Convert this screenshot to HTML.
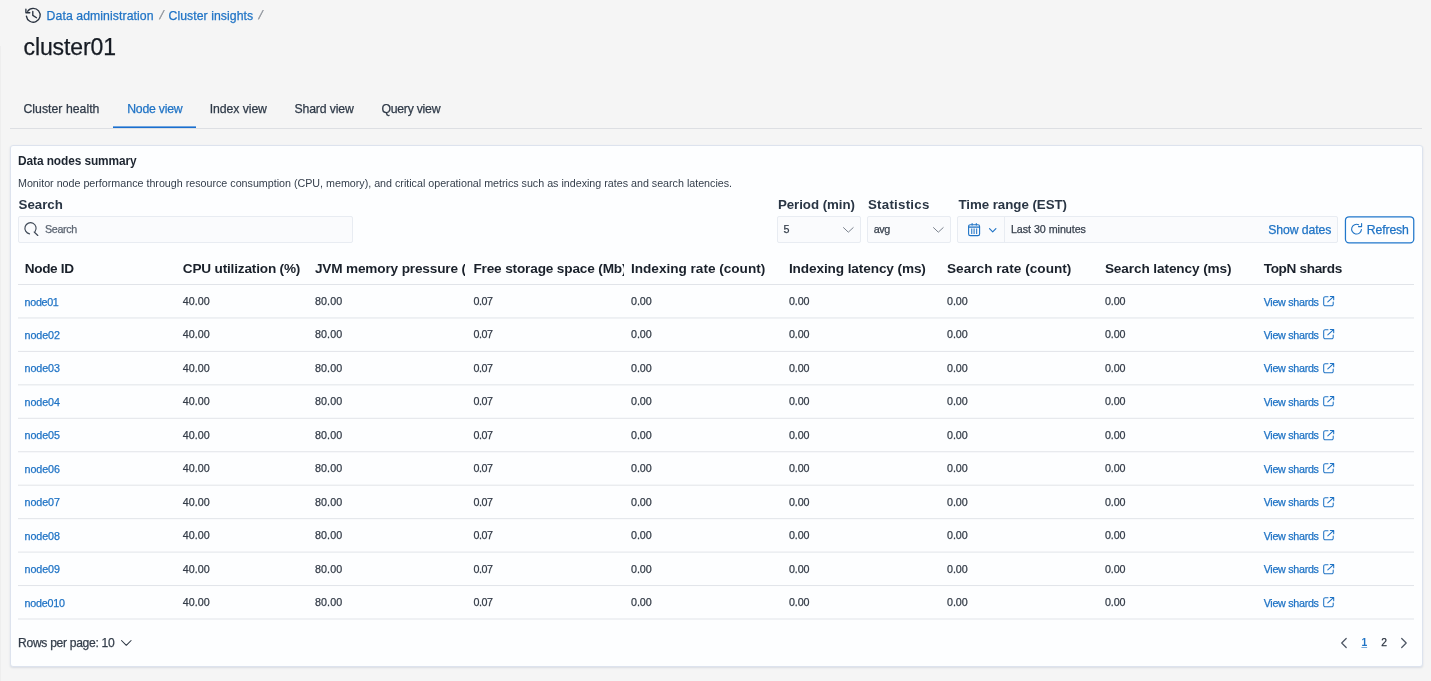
<!DOCTYPE html>
<html lang="en">
<head>
<meta charset="utf-8">
<title>cluster01 - Cluster insights</title>
<style>
*{box-sizing:border-box;margin:0;padding:0}
html,body{width:1431px;height:681px;overflow:hidden}
html{background:#f5f5f5}
body{font-family:"Liberation Sans",sans-serif;color:#2a3340;position:relative}
#page{position:absolute;left:0;top:0;width:1431px;height:681px;will-change:transform}
.t{position:absolute;white-space:nowrap;line-height:1;-webkit-text-stroke:0.25px}
.b{position:absolute}
svg{position:absolute;overflow:visible}
.field{position:absolute;top:216px;height:27px;background:#fafbfd;border:1px solid #e8ecf2;border-radius:2px}
</style>
</head>
<body>
<div id="page">
<!-- breadcrumb history icon -->
<svg style="left:20px;top:2px" width="30" height="26" viewBox="0 0 30 26" fill="none" stroke="#2a3340" stroke-width="1.35" stroke-linecap="round" stroke-linejoin="round"><path d="M7.6 9.3A6.9 6.9 0 1 1 6.4 14.1"/><path d="M5.9 7.2V10.7H9.8"/><path d="M12.8 9.4V13.4L16.5 15.7"/></svg>

<div class="b" style="left:0;top:46px;width:1px;height:635px;background:#eeeeee"></div>
<!-- tabs -->
<div class="b" style="left:10px;top:128px;width:1412px;height:1px;background:#dddfe3"></div>
<svg style="left:0;top:120px" width="300" height="10" viewBox="0 0 300 10"><rect x="113" y="6.4" width="83" height="1.6" fill="#1a6fcf"/></svg>

<!-- panel -->
<div class="b" style="left:10px;top:145px;width:1412.5px;height:522px;background:#fdfeff;border:1px solid #dde3ee;border-radius:3px;box-shadow:0 1px 2px rgba(70,90,130,.16)"></div>

<!-- fields -->
<div class="field" style="left:18px;width:334.5px"></div>
<svg style="left:20px;top:218px" width="22" height="22" viewBox="0 0 22 22" fill="none" stroke="#3f4957" stroke-width="1.15" stroke-linecap="round"><path d="M9.53 15.81A5.6 5.6 0 1 1 15.09 13.51"/><path d="M14.2 14l3.6 3.5"/></svg>

<div class="field" style="left:776.5px;width:84.5px"></div>
<svg style="left:842.5px;top:227px" width="11" height="6" viewBox="0 0 11 6" fill="none" stroke="#7a828e" stroke-width="1" stroke-linecap="round" stroke-linejoin="round"><path d="M.5.6l4.8 4.6L10.2.6"/></svg>
<div class="field" style="left:867px;width:84px"></div>
<svg style="left:932.8px;top:227px" width="11" height="6" viewBox="0 0 11 6" fill="none" stroke="#7a828e" stroke-width="1" stroke-linecap="round" stroke-linejoin="round"><path d="M.5.6l4.8 4.6L10.2.6"/></svg>

<div class="field" style="left:957px;width:381px"></div>
<div class="b" style="left:1004px;top:217px;width:1px;height:25px;background:#e8ecf2"></div>
<svg style="left:968.2px;top:223px" width="13" height="14" viewBox="0 0 13 14" fill="none" stroke="#1f73c5" stroke-width="1.1"><rect x=".6" y="1.7" width="11" height="10.9" rx="1.7"/><path d="M.6 4.1h11" stroke-width="1.3"/><path d="M4.1.5v1.6M8.3.5v1.6" stroke-linecap="round"/><path d="M3.7 5.6v5.3M6.1 5.6v5.3M8.6 5.6v5.3" stroke-linecap="butt" stroke-width="1.2" stroke-opacity=".85"/></svg>
<svg style="left:989px;top:227.6px" width="8" height="5" viewBox="0 0 8 5" fill="none" stroke="#1f73c5" stroke-width="1.15" stroke-linecap="round" stroke-linejoin="round"><path d="M.5.6l3.2 3.2L6.9.6"/></svg>

<!-- refresh button -->
<svg style="left:1344px;top:215px" width="72" height="30" viewBox="0 0 72 30"><rect x="1.45" y="1.75" width="68.3" height="26.1" rx="3.6" fill="#fdfeff" stroke="#2177cb" stroke-width="1.25"/></svg>
<svg style="left:1351px;top:223.4px" width="12" height="12" viewBox="0 0 12 12" fill="none" stroke="#1f73c5" stroke-width="1.1" stroke-linecap="round" stroke-linejoin="round"><path d="M10.4 6.6A4.9 4.9 0 1 1 7.6 1.7"/><path d="M10.6.5v3.1H7.5"/></svg>

<!-- table lines -->
<svg style="left:0;top:0" width="1431" height="681" viewBox="0 0 1431 681" fill="#e1e4e9"><rect x="18" y="284.00" width="1396" height="1"/><rect x="18" y="317.45" width="1396" height="1"/><rect x="18" y="350.90" width="1396" height="1"/><rect x="18" y="384.35" width="1396" height="1"/><rect x="18" y="417.80" width="1396" height="1"/><rect x="18" y="451.25" width="1396" height="1"/><rect x="18" y="484.70" width="1396" height="1"/><rect x="18" y="518.15" width="1396" height="1"/><rect x="18" y="551.60" width="1396" height="1"/><rect x="18" y="585.05" width="1396" height="1"/><rect x="18" y="618.50" width="1396" height="1"/></svg>
<svg style="left:1322.9px;top:296.00px" width="11" height="11" viewBox="0 0 11 11" fill="none" stroke="#1f73c5" stroke-width="1.05" stroke-linecap="round" stroke-linejoin="round"><path d="M5 .8H2.200a1.500 1.500 0 0 0-1.500 1.500V8.300a1.500 1.500 0 0 0 1.500 1.500H8.700a1.500 1.500 0 0 0 1.500-1.500V6.100"/><path d="M4.800 5.900L10.500.6M7.300.5H10.700V3.700"/></svg>
<svg style="left:1322.9px;top:329.45px" width="11" height="11" viewBox="0 0 11 11" fill="none" stroke="#1f73c5" stroke-width="1.05" stroke-linecap="round" stroke-linejoin="round"><path d="M5 .8H2.200a1.500 1.500 0 0 0-1.500 1.500V8.300a1.500 1.500 0 0 0 1.500 1.500H8.700a1.500 1.500 0 0 0 1.500-1.500V6.100"/><path d="M4.800 5.900L10.500.6M7.300.5H10.700V3.700"/></svg>
<svg style="left:1322.9px;top:362.90px" width="11" height="11" viewBox="0 0 11 11" fill="none" stroke="#1f73c5" stroke-width="1.05" stroke-linecap="round" stroke-linejoin="round"><path d="M5 .8H2.200a1.500 1.500 0 0 0-1.500 1.500V8.300a1.500 1.500 0 0 0 1.500 1.500H8.700a1.500 1.500 0 0 0 1.500-1.500V6.100"/><path d="M4.800 5.900L10.500.6M7.300.5H10.700V3.700"/></svg>
<svg style="left:1322.9px;top:396.35px" width="11" height="11" viewBox="0 0 11 11" fill="none" stroke="#1f73c5" stroke-width="1.05" stroke-linecap="round" stroke-linejoin="round"><path d="M5 .8H2.200a1.500 1.500 0 0 0-1.500 1.500V8.300a1.500 1.500 0 0 0 1.500 1.500H8.700a1.500 1.500 0 0 0 1.500-1.500V6.100"/><path d="M4.800 5.900L10.500.6M7.300.5H10.700V3.700"/></svg>
<svg style="left:1322.9px;top:429.80px" width="11" height="11" viewBox="0 0 11 11" fill="none" stroke="#1f73c5" stroke-width="1.05" stroke-linecap="round" stroke-linejoin="round"><path d="M5 .8H2.200a1.500 1.500 0 0 0-1.500 1.500V8.300a1.500 1.500 0 0 0 1.500 1.500H8.700a1.500 1.500 0 0 0 1.500-1.500V6.100"/><path d="M4.800 5.900L10.500.6M7.300.5H10.700V3.700"/></svg>
<svg style="left:1322.9px;top:463.25px" width="11" height="11" viewBox="0 0 11 11" fill="none" stroke="#1f73c5" stroke-width="1.05" stroke-linecap="round" stroke-linejoin="round"><path d="M5 .8H2.200a1.500 1.500 0 0 0-1.500 1.500V8.300a1.500 1.500 0 0 0 1.500 1.500H8.700a1.500 1.500 0 0 0 1.500-1.500V6.100"/><path d="M4.800 5.900L10.500.6M7.300.5H10.700V3.700"/></svg>
<svg style="left:1322.9px;top:496.70px" width="11" height="11" viewBox="0 0 11 11" fill="none" stroke="#1f73c5" stroke-width="1.05" stroke-linecap="round" stroke-linejoin="round"><path d="M5 .8H2.200a1.500 1.500 0 0 0-1.500 1.500V8.300a1.500 1.500 0 0 0 1.500 1.500H8.700a1.500 1.500 0 0 0 1.500-1.500V6.100"/><path d="M4.800 5.900L10.500.6M7.300.5H10.700V3.700"/></svg>
<svg style="left:1322.9px;top:530.15px" width="11" height="11" viewBox="0 0 11 11" fill="none" stroke="#1f73c5" stroke-width="1.05" stroke-linecap="round" stroke-linejoin="round"><path d="M5 .8H2.200a1.500 1.500 0 0 0-1.500 1.500V8.300a1.500 1.500 0 0 0 1.500 1.500H8.700a1.500 1.500 0 0 0 1.500-1.500V6.100"/><path d="M4.800 5.900L10.500.6M7.300.5H10.700V3.700"/></svg>
<svg style="left:1322.9px;top:563.60px" width="11" height="11" viewBox="0 0 11 11" fill="none" stroke="#1f73c5" stroke-width="1.05" stroke-linecap="round" stroke-linejoin="round"><path d="M5 .8H2.200a1.500 1.500 0 0 0-1.500 1.500V8.300a1.500 1.500 0 0 0 1.500 1.500H8.700a1.500 1.500 0 0 0 1.500-1.500V6.100"/><path d="M4.800 5.900L10.500.6M7.300.5H10.700V3.700"/></svg>
<svg style="left:1322.9px;top:597.05px" width="11" height="11" viewBox="0 0 11 11" fill="none" stroke="#1f73c5" stroke-width="1.05" stroke-linecap="round" stroke-linejoin="round"><path d="M5 .8H2.200a1.500 1.500 0 0 0-1.500 1.500V8.300a1.500 1.500 0 0 0 1.500 1.500H8.700a1.500 1.500 0 0 0 1.500-1.500V6.100"/><path d="M4.800 5.900L10.500.6M7.300.5H10.700V3.700"/></svg>

<!-- footer -->
<svg style="left:120.8px;top:640.2px" width="11" height="6" viewBox="0 0 11 6" fill="none" stroke="#2a3340" stroke-width="1.05" stroke-linecap="round" stroke-linejoin="round"><path d="M.5.5l4.8 4.8L10.1.5"/></svg>
<svg style="left:1341px;top:638px" width="6" height="10" viewBox="0 0 6 10" fill="none" stroke="#4d5664" stroke-width="1.25" stroke-linecap="round" stroke-linejoin="round"><path d="M5.2.5L.7 5l4.5 4.5"/></svg>
<svg style="left:1401.3px;top:638px" width="6" height="10" viewBox="0 0 6 10" fill="none" stroke="#4d5664" stroke-width="1.25" stroke-linecap="round" stroke-linejoin="round"><path d="M.7.5L5.2 5 .7 9.500"/></svg>

<div class="t" style="left:46.6px;top:10.22px;font-size:12.25px;color:#1f73c5;letter-spacing:0.076px;">Data administration</div>
<div class="t" style="left:159.5px;top:9.22px;font-size:12.25px;color:#8c9199;transform:skewX(-14deg);">/</div>
<div class="t" style="left:168.5px;top:10.22px;font-size:12.25px;color:#1f73c5;letter-spacing:0.059px;">Cluster insights</div>
<div class="t" style="left:258.5px;top:9.22px;font-size:12.25px;color:#8c9199;transform:skewX(-14deg);">/</div>
<div class="t" style="left:23.6px;top:36.22px;font-size:23px;color:#161b23;letter-spacing:-0.125px;">cluster01</div>
<div class="t" style="left:23.5px;top:103.22px;font-size:12.25px;color:#2f3a48;letter-spacing:0.022px;">Cluster health</div>
<div class="t" style="left:127.2px;top:103.22px;font-size:12.25px;color:#1f73c5;letter-spacing:-0.223px;">Node view</div>
<div class="t" style="left:209.8px;top:103.22px;font-size:12.25px;color:#2f3a48;letter-spacing:-0.079px;">Index view</div>
<div class="t" style="left:294.5px;top:103.22px;font-size:12.25px;color:#2f3a48;letter-spacing:-0.151px;">Shard view</div>
<div class="t" style="left:381.4px;top:103.22px;font-size:12.25px;color:#2f3a48;letter-spacing:-0.238px;">Query view</div>
<div class="t" style="left:18.1px;top:156.22px;font-size:11.9px;font-weight:bold;-webkit-text-stroke:0;color:#1d2530;letter-spacing:-0.099px;">Data nodes summary</div>
<div class="t" style="left:18.0px;top:178.22px;font-size:10.72px;color:#343e4b;letter-spacing:-0.010px;-webkit-text-stroke:0;">Monitor node performance through resource consumption (CPU, memory), and critical operational metrics such as indexing rates and search latencies.</div>
<div class="t" style="left:18.5px;top:198.22px;font-size:13.3px;font-weight:bold;-webkit-text-stroke:0;color:#2a3645;letter-spacing:0.007px;">Search</div>
<div class="t" style="left:777.9px;top:198.22px;font-size:13.3px;font-weight:bold;-webkit-text-stroke:0;color:#2a3645;letter-spacing:-0.048px;">Period (min)</div>
<div class="t" style="left:868.0px;top:198.22px;font-size:13.3px;font-weight:bold;-webkit-text-stroke:0;color:#2a3645;letter-spacing:0.248px;">Statistics</div>
<div class="t" style="left:958.4px;top:198.22px;font-size:13.3px;font-weight:bold;-webkit-text-stroke:0;color:#2a3645;letter-spacing:-0.032px;">Time range (EST)</div>
<div class="t" style="left:44.9px;top:224.22px;font-size:10.72px;color:#5d6673;letter-spacing:-0.311px;">Search</div>
<div class="t" style="left:783.4px;top:224.22px;font-size:10.72px;color:#39424f;">5</div>
<div class="t" style="left:873.7px;top:224.22px;font-size:10.72px;color:#39424f;letter-spacing:-0.332px;">avg</div>
<div class="t" style="left:1010.9px;top:224.22px;font-size:10.72px;color:#39424f;letter-spacing:-0.045px;">Last 30 minutes</div>
<div class="t" style="left:1268.2px;top:224.22px;font-size:12.25px;color:#1f73c5;letter-spacing:-0.102px;">Show dates</div>
<div class="t" style="left:1366.8px;top:224.22px;font-size:12.25px;color:#1f73c5;letter-spacing:-0.129px;">Refresh</div>
<div class="t" style="left:24.7px;top:262.22px;font-size:13.6px;font-weight:bold;-webkit-text-stroke:0;color:#1a212b;letter-spacing:-0.337px;">Node ID</div>
<div class="t" style="left:182.8px;top:262.22px;font-size:13.6px;font-weight:bold;-webkit-text-stroke:0;color:#1a212b;letter-spacing:-0.180px;">CPU utilization (%)</div>
<div class="t" style="left:314.9px;top:262.22px;font-size:13.6px;font-weight:bold;-webkit-text-stroke:0;color:#1a212b;letter-spacing:-0.149px;width:150px;overflow:hidden;">JVM memory pressure (%)</div>
<div class="t" style="left:473.4px;top:262.22px;font-size:13.6px;font-weight:bold;-webkit-text-stroke:0;color:#1a212b;letter-spacing:-0.149px;width:150.5px;overflow:hidden;">Free storage space (Mb)</div>
<div class="t" style="left:631.0px;top:262.22px;font-size:13.6px;font-weight:bold;-webkit-text-stroke:0;color:#1a212b;letter-spacing:-0.011px;">Indexing rate (count)</div>
<div class="t" style="left:788.9px;top:262.22px;font-size:13.6px;font-weight:bold;-webkit-text-stroke:0;color:#1a212b;letter-spacing:-0.100px;">Indexing latency (ms)</div>
<div class="t" style="left:947.0px;top:262.22px;font-size:13.6px;font-weight:bold;-webkit-text-stroke:0;color:#1a212b;letter-spacing:0.027px;">Search rate (count)</div>
<div class="t" style="left:1104.9px;top:262.22px;font-size:13.6px;font-weight:bold;-webkit-text-stroke:0;color:#1a212b;letter-spacing:-0.098px;">Search latency (ms)</div>
<div class="t" style="left:1263.7px;top:262.22px;font-size:13.6px;font-weight:bold;-webkit-text-stroke:0;color:#1a212b;letter-spacing:-0.343px;">TopN shards</div>
<div class="t" style="left:24.6px;top:297.22px;font-size:10.72px;color:#1f73c5;letter-spacing:-0.314px;">node01</div>
<div class="t" style="left:182.8px;top:296.22px;font-size:10.72px;color:#353d49;letter-spacing:0.054px;">40.00</div>
<div class="t" style="left:314.9px;top:296.22px;font-size:10.72px;color:#353d49;letter-spacing:0.154px;">80.00</div>
<div class="t" style="left:473.4px;top:296.22px;font-size:10.72px;color:#353d49;letter-spacing:-0.469px;">0.07</div>
<div class="t" style="left:631.0px;top:296.22px;font-size:10.72px;color:#353d49;letter-spacing:-0.069px;">0.00</div>
<div class="t" style="left:788.9px;top:296.22px;font-size:10.72px;color:#353d49;letter-spacing:-0.069px;">0.00</div>
<div class="t" style="left:947.0px;top:296.22px;font-size:10.72px;color:#353d49;letter-spacing:-0.069px;">0.00</div>
<div class="t" style="left:1104.9px;top:296.22px;font-size:10.72px;color:#353d49;letter-spacing:-0.069px;">0.00</div>
<div class="t" style="left:1263.7px;top:297.22px;font-size:10.72px;color:#1f73c5;letter-spacing:-0.291px;">View shards</div>
<div class="t" style="left:24.6px;top:330.22px;font-size:10.72px;color:#1f73c5;letter-spacing:-0.080px;">node02</div>
<div class="t" style="left:182.8px;top:329.22px;font-size:10.72px;color:#353d49;letter-spacing:0.054px;">40.00</div>
<div class="t" style="left:314.9px;top:329.22px;font-size:10.72px;color:#353d49;letter-spacing:0.154px;">80.00</div>
<div class="t" style="left:473.4px;top:329.22px;font-size:10.72px;color:#353d49;letter-spacing:-0.469px;">0.07</div>
<div class="t" style="left:631.0px;top:329.22px;font-size:10.72px;color:#353d49;letter-spacing:-0.069px;">0.00</div>
<div class="t" style="left:788.9px;top:329.22px;font-size:10.72px;color:#353d49;letter-spacing:-0.069px;">0.00</div>
<div class="t" style="left:947.0px;top:329.22px;font-size:10.72px;color:#353d49;letter-spacing:-0.069px;">0.00</div>
<div class="t" style="left:1104.9px;top:329.22px;font-size:10.72px;color:#353d49;letter-spacing:-0.069px;">0.00</div>
<div class="t" style="left:1263.7px;top:330.22px;font-size:10.72px;color:#1f73c5;letter-spacing:-0.291px;">View shards</div>
<div class="t" style="left:24.6px;top:363.22px;font-size:10.72px;color:#1f73c5;letter-spacing:-0.080px;">node03</div>
<div class="t" style="left:182.8px;top:363.22px;font-size:10.72px;color:#353d49;letter-spacing:0.054px;">40.00</div>
<div class="t" style="left:314.9px;top:363.22px;font-size:10.72px;color:#353d49;letter-spacing:0.154px;">80.00</div>
<div class="t" style="left:473.4px;top:363.22px;font-size:10.72px;color:#353d49;letter-spacing:-0.469px;">0.07</div>
<div class="t" style="left:631.0px;top:363.22px;font-size:10.72px;color:#353d49;letter-spacing:-0.069px;">0.00</div>
<div class="t" style="left:788.9px;top:363.22px;font-size:10.72px;color:#353d49;letter-spacing:-0.069px;">0.00</div>
<div class="t" style="left:947.0px;top:363.22px;font-size:10.72px;color:#353d49;letter-spacing:-0.069px;">0.00</div>
<div class="t" style="left:1104.9px;top:363.22px;font-size:10.72px;color:#353d49;letter-spacing:-0.069px;">0.00</div>
<div class="t" style="left:1263.7px;top:363.22px;font-size:10.72px;color:#1f73c5;letter-spacing:-0.291px;">View shards</div>
<div class="t" style="left:24.6px;top:397.22px;font-size:10.72px;color:#1f73c5;letter-spacing:-0.080px;">node04</div>
<div class="t" style="left:182.8px;top:396.22px;font-size:10.72px;color:#353d49;letter-spacing:0.054px;">40.00</div>
<div class="t" style="left:314.9px;top:396.22px;font-size:10.72px;color:#353d49;letter-spacing:0.154px;">80.00</div>
<div class="t" style="left:473.4px;top:396.22px;font-size:10.72px;color:#353d49;letter-spacing:-0.469px;">0.07</div>
<div class="t" style="left:631.0px;top:396.22px;font-size:10.72px;color:#353d49;letter-spacing:-0.069px;">0.00</div>
<div class="t" style="left:788.9px;top:396.22px;font-size:10.72px;color:#353d49;letter-spacing:-0.069px;">0.00</div>
<div class="t" style="left:947.0px;top:396.22px;font-size:10.72px;color:#353d49;letter-spacing:-0.069px;">0.00</div>
<div class="t" style="left:1104.9px;top:396.22px;font-size:10.72px;color:#353d49;letter-spacing:-0.069px;">0.00</div>
<div class="t" style="left:1263.7px;top:397.22px;font-size:10.72px;color:#1f73c5;letter-spacing:-0.291px;">View shards</div>
<div class="t" style="left:24.6px;top:430.22px;font-size:10.72px;color:#1f73c5;letter-spacing:-0.080px;">node05</div>
<div class="t" style="left:182.8px;top:430.22px;font-size:10.72px;color:#353d49;letter-spacing:0.054px;">40.00</div>
<div class="t" style="left:314.9px;top:430.22px;font-size:10.72px;color:#353d49;letter-spacing:0.154px;">80.00</div>
<div class="t" style="left:473.4px;top:430.22px;font-size:10.72px;color:#353d49;letter-spacing:-0.469px;">0.07</div>
<div class="t" style="left:631.0px;top:430.22px;font-size:10.72px;color:#353d49;letter-spacing:-0.069px;">0.00</div>
<div class="t" style="left:788.9px;top:430.22px;font-size:10.72px;color:#353d49;letter-spacing:-0.069px;">0.00</div>
<div class="t" style="left:947.0px;top:430.22px;font-size:10.72px;color:#353d49;letter-spacing:-0.069px;">0.00</div>
<div class="t" style="left:1104.9px;top:430.22px;font-size:10.72px;color:#353d49;letter-spacing:-0.069px;">0.00</div>
<div class="t" style="left:1263.7px;top:430.22px;font-size:10.72px;color:#1f73c5;letter-spacing:-0.291px;">View shards</div>
<div class="t" style="left:24.6px;top:464.22px;font-size:10.72px;color:#1f73c5;letter-spacing:-0.080px;">node06</div>
<div class="t" style="left:182.8px;top:463.22px;font-size:10.72px;color:#353d49;letter-spacing:0.054px;">40.00</div>
<div class="t" style="left:314.9px;top:463.22px;font-size:10.72px;color:#353d49;letter-spacing:0.154px;">80.00</div>
<div class="t" style="left:473.4px;top:463.22px;font-size:10.72px;color:#353d49;letter-spacing:-0.469px;">0.07</div>
<div class="t" style="left:631.0px;top:463.22px;font-size:10.72px;color:#353d49;letter-spacing:-0.069px;">0.00</div>
<div class="t" style="left:788.9px;top:463.22px;font-size:10.72px;color:#353d49;letter-spacing:-0.069px;">0.00</div>
<div class="t" style="left:947.0px;top:463.22px;font-size:10.72px;color:#353d49;letter-spacing:-0.069px;">0.00</div>
<div class="t" style="left:1104.9px;top:463.22px;font-size:10.72px;color:#353d49;letter-spacing:-0.069px;">0.00</div>
<div class="t" style="left:1263.7px;top:464.22px;font-size:10.72px;color:#1f73c5;letter-spacing:-0.291px;">View shards</div>
<div class="t" style="left:24.6px;top:497.22px;font-size:10.72px;color:#1f73c5;letter-spacing:-0.080px;">node07</div>
<div class="t" style="left:182.8px;top:497.22px;font-size:10.72px;color:#353d49;letter-spacing:0.054px;">40.00</div>
<div class="t" style="left:314.9px;top:497.22px;font-size:10.72px;color:#353d49;letter-spacing:0.154px;">80.00</div>
<div class="t" style="left:473.4px;top:497.22px;font-size:10.72px;color:#353d49;letter-spacing:-0.469px;">0.07</div>
<div class="t" style="left:631.0px;top:497.22px;font-size:10.72px;color:#353d49;letter-spacing:-0.069px;">0.00</div>
<div class="t" style="left:788.9px;top:497.22px;font-size:10.72px;color:#353d49;letter-spacing:-0.069px;">0.00</div>
<div class="t" style="left:947.0px;top:497.22px;font-size:10.72px;color:#353d49;letter-spacing:-0.069px;">0.00</div>
<div class="t" style="left:1104.9px;top:497.22px;font-size:10.72px;color:#353d49;letter-spacing:-0.069px;">0.00</div>
<div class="t" style="left:1263.7px;top:497.22px;font-size:10.72px;color:#1f73c5;letter-spacing:-0.291px;">View shards</div>
<div class="t" style="left:24.6px;top:531.22px;font-size:10.72px;color:#1f73c5;letter-spacing:-0.080px;">node08</div>
<div class="t" style="left:182.8px;top:530.22px;font-size:10.72px;color:#353d49;letter-spacing:0.054px;">40.00</div>
<div class="t" style="left:314.9px;top:530.22px;font-size:10.72px;color:#353d49;letter-spacing:0.154px;">80.00</div>
<div class="t" style="left:473.4px;top:530.22px;font-size:10.72px;color:#353d49;letter-spacing:-0.469px;">0.07</div>
<div class="t" style="left:631.0px;top:530.22px;font-size:10.72px;color:#353d49;letter-spacing:-0.069px;">0.00</div>
<div class="t" style="left:788.9px;top:530.22px;font-size:10.72px;color:#353d49;letter-spacing:-0.069px;">0.00</div>
<div class="t" style="left:947.0px;top:530.22px;font-size:10.72px;color:#353d49;letter-spacing:-0.069px;">0.00</div>
<div class="t" style="left:1104.9px;top:530.22px;font-size:10.72px;color:#353d49;letter-spacing:-0.069px;">0.00</div>
<div class="t" style="left:1263.7px;top:531.22px;font-size:10.72px;color:#1f73c5;letter-spacing:-0.291px;">View shards</div>
<div class="t" style="left:24.6px;top:564.22px;font-size:10.72px;color:#1f73c5;letter-spacing:-0.080px;">node09</div>
<div class="t" style="left:182.8px;top:564.22px;font-size:10.72px;color:#353d49;letter-spacing:0.054px;">40.00</div>
<div class="t" style="left:314.9px;top:564.22px;font-size:10.72px;color:#353d49;letter-spacing:0.154px;">80.00</div>
<div class="t" style="left:473.4px;top:564.22px;font-size:10.72px;color:#353d49;letter-spacing:-0.469px;">0.07</div>
<div class="t" style="left:631.0px;top:564.22px;font-size:10.72px;color:#353d49;letter-spacing:-0.069px;">0.00</div>
<div class="t" style="left:788.9px;top:564.22px;font-size:10.72px;color:#353d49;letter-spacing:-0.069px;">0.00</div>
<div class="t" style="left:947.0px;top:564.22px;font-size:10.72px;color:#353d49;letter-spacing:-0.069px;">0.00</div>
<div class="t" style="left:1104.9px;top:564.22px;font-size:10.72px;color:#353d49;letter-spacing:-0.069px;">0.00</div>
<div class="t" style="left:1263.7px;top:564.22px;font-size:10.72px;color:#1f73c5;letter-spacing:-0.291px;">View shards</div>
<div class="t" style="left:24.6px;top:598.22px;font-size:10.72px;color:#1f73c5;letter-spacing:-0.233px;">node010</div>
<div class="t" style="left:182.8px;top:597.22px;font-size:10.72px;color:#353d49;letter-spacing:0.054px;">40.00</div>
<div class="t" style="left:314.9px;top:597.22px;font-size:10.72px;color:#353d49;letter-spacing:0.154px;">80.00</div>
<div class="t" style="left:473.4px;top:597.22px;font-size:10.72px;color:#353d49;letter-spacing:-0.469px;">0.07</div>
<div class="t" style="left:631.0px;top:597.22px;font-size:10.72px;color:#353d49;letter-spacing:-0.069px;">0.00</div>
<div class="t" style="left:788.9px;top:597.22px;font-size:10.72px;color:#353d49;letter-spacing:-0.069px;">0.00</div>
<div class="t" style="left:947.0px;top:597.22px;font-size:10.72px;color:#353d49;letter-spacing:-0.069px;">0.00</div>
<div class="t" style="left:1104.9px;top:597.22px;font-size:10.72px;color:#353d49;letter-spacing:-0.069px;">0.00</div>
<div class="t" style="left:1263.7px;top:598.22px;font-size:10.72px;color:#1f73c5;letter-spacing:-0.291px;">View shards</div>
<div class="t" style="left:18.1px;top:637.22px;font-size:12.1px;color:#343e4b;letter-spacing:-0.307px;">Rows per page: 10</div>
<div class="t" style="left:1361.4px;top:638.22px;font-size:10.3px;font-weight:bold;-webkit-text-stroke:0;color:#1f73c5;text-decoration:underline;text-decoration-color:rgba(31,115,197,.6);">1</div>
<div class="t" style="left:1381.3px;top:638.22px;font-size:10.3px;color:#2a3340;">2</div>
</div>
</body>
</html>
